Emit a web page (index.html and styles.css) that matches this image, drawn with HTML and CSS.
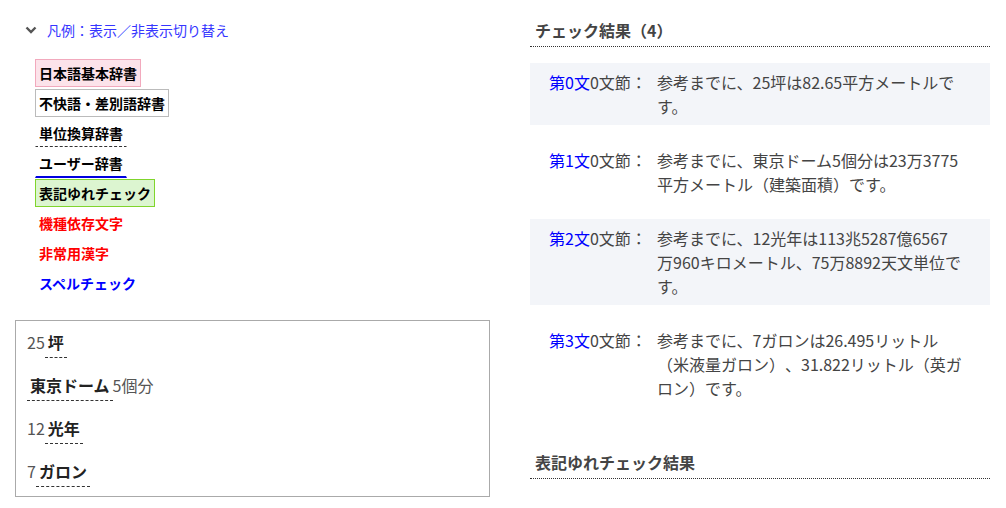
FILE: index.html
```html
<!DOCTYPE html>
<html lang="ja">
<head>
<meta charset="utf-8">
<title>チェック結果</title>
<link rel="stylesheet" href="styles.css">
</head>
<body>
<div class="page">
  <div class="left">
    <div class="toggle">
      <svg class="chevron" width="12" height="8" viewBox="0 0 12 8"><polyline points="1.5,1.5 6,6 10.5,1.5" fill="none" stroke="#555" stroke-width="2.4"/></svg>
      <span class="toggle-text">凡例：表示／非表示切り替え</span>
    </div>
    <ul class="legend">
      <li><span class="tag tag-basic">日本語基本辞書</span></li>
      <li><span class="tag tag-offensive">不快語・差別語辞書</span></li>
      <li><span class="tag tag-unit">単位換算辞書</span></li>
      <li><span class="tag tag-user">ユーザー辞書</span></li>
      <li><span class="tag tag-yure">表記ゆれチェック</span></li>
      <li><span class="tag tag-red">機種依存文字</span></li>
      <li><span class="tag tag-red">非常用漢字</span></li>
      <li><span class="tag tag-blue">スペルチェック</span></li>
    </ul>
    <div class="sample">
      <div class="sample-line">25<span class="word">坪</span></div>
      <div class="sample-line"><span class="word">東京ドーム</span>5個分</div>
      <div class="sample-line">12<span class="word">光年</span></div>
      <div class="sample-line">7<span class="word">ガロン</span></div>
    </div>
  </div>
  <div class="right">
    <h2 class="heading">チェック結果（4）</h2>
    <div class="result-list">
      <div class="result shaded">
        <div class="label"><span class="ref">第0文</span>0文節：</div>
        <div class="text">参考までに、25坪は82.65平方メートルで<br>す。</div>
      </div>
      <div class="result">
        <div class="label"><span class="ref">第1文</span>0文節：</div>
        <div class="text">参考までに、東京ドーム5個分は23万3775<br>平方メートル（建築面積）です。</div>
      </div>
      <div class="result shaded">
        <div class="label"><span class="ref">第2文</span>0文節：</div>
        <div class="text">参考までに、12光年は113兆5287億6567<br>万960キロメートル、75万8892天文単位で<br>す。</div>
      </div>
      <div class="result">
        <div class="label"><span class="ref">第3文</span>0文節：</div>
        <div class="text">参考までに、7ガロンは26.495リットル<br>（米液量ガロン）、31.822リットル（英ガ<br>ロン）です。</div>
      </div>
    </div>
    <h2 class="heading">表記ゆれチェック結果</h2>
  </div>
</div>
</body>
</html>
```
FILE: styles.css
```css
* { box-sizing: border-box; }
body {
  margin: 0;
  font-family: "Noto Sans CJK JP", "Noto Sans", sans-serif;
  color: #444;
  background: #fff;
  text-spacing-trim: space-all;
}
.page {
  display: flex;
  gap: 40px;
  padding: 0 16px 0 15px;
}
.left { width: 475px; flex: none; }
.right { width: 460px; flex: none; padding-top: 18px; }

.toggle {
  display: flex;
  align-items: center;
  gap: 10px;
  margin-top: 20px;
  padding-left: 10px;
  height: 20px;
}
.chevron { display: block; flex: none; }
.toggle-text {
  font-size: 14px;
  line-height: 20px;
  color: #3636ff;
}

.legend {
  list-style: none;
  margin: 19px 0 0;
  padding: 0 0 0 20px;
}
.legend li {
  margin-bottom: 2px;
  height: 28px;
}
.tag {
  display: inline-block;
  font-size: 14px;
  line-height: 20px;
  font-weight: bold;
  padding: 3px 3px;
  border: 1px solid transparent;
  color: #000;
}
.tag-basic { background: #fce3ea; border-color: #f2a9bd; }
.tag-offensive { background: #fff; border-color: #bbb; }
.tag-unit { border-bottom: 1px dashed #333; }
.tag-user { border-bottom: 2px solid #0000e0; }
.tag-yure { background: #dcf5d0; border-color: #80d52c; }
.tag-red { color: #f00; }
.tag-blue { color: #00f; }

.sample {
  margin-top: 23px;
  border: 1px solid #aaa;
  padding: 9px 11px 9px;
  font-size: 16px;
  color: #555;
}
.sample-line {
  line-height: 24px;
  margin-bottom: 15px;
}
.sample-line:last-child { margin-bottom: 0; }
.word {
  display: inline-block;
  line-height: 24px;
  padding: 0 3px 3px;
  border-bottom: 1px dashed #333;
  font-weight: bold;
  color: #222;
}

.heading {
  margin: 0;
  font-size: 16px;
  line-height: 24px;
  font-weight: bold;
  color: #444;
  padding: 0 5px 4px;
  border-bottom: 1px dotted #333;
}
.result-list {
  display: flex;
  flex-direction: column;
  gap: 16px;
  margin: 16px 0 43px;
}
.result {
  display: grid;
  grid-template-columns: 108px 1fr;
  padding: 7px 16px 7px 19px;
  font-size: 16px;
  line-height: 24px;
  color: #444;
}
.result.shaded { background: #f3f5f9; }
.label { white-space: nowrap; }
.ref { color: #0000ff; }
.text { white-space: nowrap; }
```
